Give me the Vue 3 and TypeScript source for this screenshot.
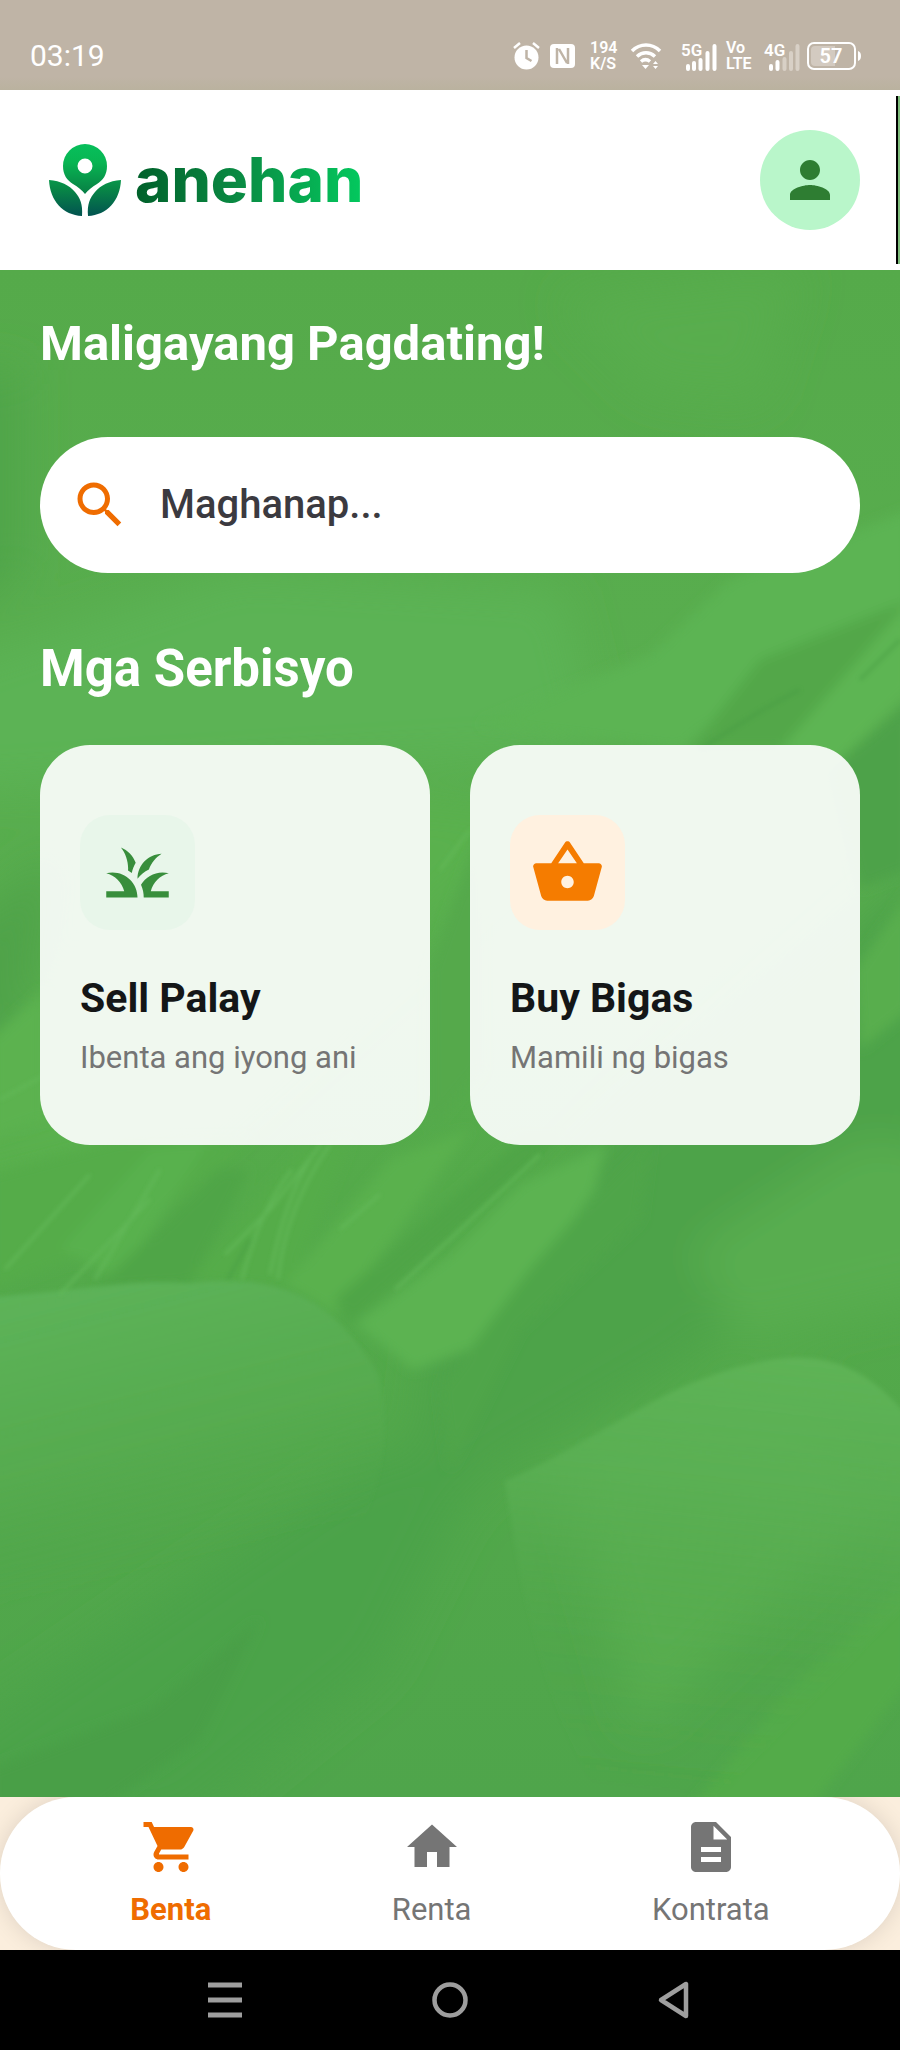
<script setup lang="ts">
import { ref } from 'vue'

interface Service {
  title: string
  note: string
  tone: string
  icon: string
}

interface Tab {
  label: string
  icon: string
}

const services: Service[] = [
  {
    title: 'Sell Palay',
    note: 'Ibenta ang iyong ani',
    tone: 'leaf',
    icon: 'M12 20H2v-2h5.75C7.02 15.19 4.81 12.99 2 12.26C2.64 12.1 3.31 12 4 12C8.42 12 12 15.58 12 20zM22 12.26C21.36 12.1 20.69 12 20 12c-2.93 0-5.48 1.58-6.88 3.93c.29.66.53 1.35.67 2.07c.13.65.2 1.32.2 2H22v-2h-5.75C16.98 15.19 19.19 12.99 22 12.26zM15.64 11.02c.78-2.09 2.23-3.84 4.09-5C15.44 6.16 12 9.67 12 14c0 .01 0 .02 0 .02C12.95 12.75 14.2 11.72 15.64 11.02zM11.42 8.85C10.58 6.66 8.88 4.89 6.7 4C8.14 5.86 9 8.18 9 10.71c0 .21-.03.41-.04.61c.43.24.83.52 1.22.82C10.39 10.96 10.83 9.85 11.42 8.85z',
  },
  {
    title: 'Buy Bigas',
    note: 'Mamili ng bigas',
    tone: 'grain',
    icon: 'M17.21 9l-4.38-6.56c-.19-.28-.51-.42-.83-.42-.32 0-.64.14-.83.43L6.79 9H2c-.55 0-1 .45-1 1 0 .09.01.18.04.27l2.54 9.27c.23.84 1 1.46 1.92 1.46h13c.92 0 1.69-.62 1.93-1.46l2.54-9.27L23 10c0-.55-.45-1-1-1h-4.79zM9 9l3-4.4L15 9H9zm3 8c-1.100 0-2-.9-2-2s.9-2 2-2 2 .9 2 2-.9 2-2 2z',
  },
]

const tabs: Tab[] = [
  {
    label: 'Benta',
    icon: 'M7 18c-1.100 0-1.990.9-1.990 2S5.900 22 7 22s2-.9 2-2-.9-2-2-2zM1 2v2h2l3.600 7.590-1.350 2.450c-.16.28-.25.61-.25.960 0 1.100.9 2 2 2h12v-2H7.420c-.14 0-.25-.11-.25-.25l.03-.12.9-1.630h7.450c.75 0 1.410-.41 1.750-1.030l3.580-6.490c.08-.14.12-.31.12-.48 0-.55-.45-1-1-1H5.210l-.94-2H1zm16 16c-1.100 0-1.990.9-1.990 2s.89 2 1.990 2 2-.9 2-2-.9-2-2-2z',
  },
  { label: 'Renta', icon: 'M10 20v-6h4v6h5v-8h3L12 3 2 12h3v8z' },
  {
    label: 'Kontrata',
    icon: 'M14 2H6c-1.100 0-1.990.9-1.990 2L4 20c0 1.100.89 2 1.990 2H18c1.100 0 2-.9 2-2V8l-6-6zm2 16H8v-2h8v2zm0-4H8v-2h8v2zm-3-5V3.500L18.500 9H13z',
  },
]

const active = ref('Benta')
const query = ref('')
</script>

<template>
  <div class="phone">
    <div class="status">
      <span class="clock">03:19</span>
      <div class="indicators">
        <svg width="30" height="28" viewBox="0 0 30 28">
          <circle cx="13.500" cy="15.500" r="12" fill="#fff" />
          <path d="M1 6l6-5M26 6l-6-5" stroke="#fff" stroke-width="2.500" />
          <path d="M13.500 8v8l5 3" fill="none" stroke="#bfb4a6" stroke-width="2.500" />
        </svg>
        <svg class="nfc" width="25" height="24" viewBox="0 0 25 24">
          <rect width="25" height="24" rx="4" fill="#fff" />
          <path d="M7 4v16M9 5l8 14M18 4v16" fill="none" stroke="#bfb4a6" stroke-width="2.500" />
        </svg>
        <span class="stack wide">194<br />K/S</span>
        <svg class="wifi" width="30" height="27" viewBox="0 0 30 27">
          <path d="M1 8c8-8 20-8 28 0M6 13.500c5.500-5 12.500-5 18 0M10 18.500c3-2.500 6-2.500 9 0" fill="none" stroke="#fff" stroke-width="3.500" />
          <path d="M11 22h7l-3.500 4zM22 21l2.500-3 2.500 3zM22 23h5l-2.500 3z" fill="#fff" />
        </svg>
        <svg width="38" height="30" viewBox="0 0 38 30">
          <text x="0" y="15" class="net">5G</text>
          <path d="M7 28v-3M13 28v-6M19.500 28v-9M26.500 28V12M33.500 28V5" stroke="#fff" stroke-width="4" stroke-linecap="round" />
        </svg>
        <span class="stack">Vo<br />LTE</span>
        <svg width="36" height="30" viewBox="0 0 36 30">
          <text x="0" y="15" class="net">4G</text>
          <path d="M7 28v-3M13.500 28v-7" stroke="#fff" stroke-width="4" stroke-linecap="round" />
          <path d="M20.500 28V18M27 28V12M33.500 28V5" stroke="#d8d0c6" stroke-width="4" stroke-linecap="round" />
        </svg>
        <svg width="55" height="28" viewBox="0 0 55 28">
          <rect x="1" y="1" width="47" height="26" rx="6" fill="none" stroke="#fff" stroke-width="2" />
          <path d="M4 8a4 4 0 0 1 4-4h20v20H8a4 4 0 0 1-4-4z" fill="#d3cac0" />
          <path d="M51 9c4 1 4 9 0 10z" fill="#fff" />
          <text x="24" y="21" text-anchor="middle" class="charge">57</text>
        </svg>
      </div>
    </div>

    <header class="top">
      <a class="brand" href="#" aria-label="anehan">
        <svg width="72" height="72" viewBox="0 0 72 72">
          <defs>
            <linearGradient id="mark" x1="0" y1="0" x2="0" y2="72" gradientUnits="userSpaceOnUse">
              <stop offset="0" stop-color="#07bf5b" />
              <stop offset=".25" stop-color="#08b653" />
              <stop offset=".62" stop-color="#088746" />
              <stop offset="1" stop-color="#025350" />
            </linearGradient>
          </defs>
          <path
            fill="url(#mark)"
            fill-rule="evenodd"
            d="M36 0a22 22 0 0 1 22 22c0 9-4 14-10 18-5 3-9 6-12 10-3-4-7-7-12-10-6-4-10-9-10-18A22 22 0 0 1 36 0zm0 14.500a7.500 7.500 0 1 0 0 15 7.500 7.500 0 0 0 0-15z"
          />
          <path fill="url(#mark)" d="M0 36c12 1 20 5 26 12 5 6 8 12 7 24C14 71 1 57 0 36zM72 36c-12 1-20 5-26 12-5 6-8 12-7 24 19-1 32-15 33-36z" />
        </svg>
        <span class="wordmark">anehan</span>
      </a>
      <button class="avatar" type="button" aria-label="Profile">
        <svg width="60" height="60" viewBox="0 0 24 24" fill="#2e7d32">
          <path d="M12 12c2.210 0 4-1.790 4-4s-1.790-4-4-4-4 1.790-4 4 1.790 4 4 4zm0 2c-2.670 0-8 1.340-8 4v2h16v-2c0-2.660-5.330-4-8-4z" />
        </svg>
      </button>
    </header>

    <main class="content">
      <svg class="field" viewBox="0 0 900 1528" preserveAspectRatio="none" aria-hidden="true">
        <defs>
          <linearGradient id="base" x1="0" y1="0" x2="0" y2="1">
            <stop offset="0" stop-color="#55aa4a" />
            <stop offset=".3" stop-color="#59ae4f" />
            <stop offset=".6" stop-color="#54aa4a" />
            <stop offset="1" stop-color="#4fa54b" />
          </linearGradient>
          <linearGradient id="grainLeft" x1="0" y1="0" x2=".2" y2="1">
            <stop offset="0" stop-color="#5eb45a" />
            <stop offset=".4" stop-color="#57ac50" stop-opacity=".8" />
            <stop offset=".65" stop-color="#50a64b" stop-opacity="0" />
          </linearGradient>
          <linearGradient id="grainRight" x1=".6" y1="0" x2=".5" y2="1">
            <stop offset="0" stop-color="#5eb356" />
            <stop offset=".3" stop-color="#5bb054" stop-opacity=".8" />
            <stop offset=".65" stop-color="#54a94d" stop-opacity=".2" />
            <stop offset="1" stop-color="#50a54b" stop-opacity="0" />
          </linearGradient>
          <filter id="haze" x="-20%" y="-20%" width="140%" height="140%"><feGaussianBlur stdDeviation="22" /></filter>
          <filter id="soft" x="-20%" y="-20%" width="140%" height="140%"><feGaussianBlur stdDeviation="6" /></filter>
          <filter id="fine" x="-5%" y="-5%" width="110%" height="110%"><feGaussianBlur stdDeviation="2" /></filter>
        </defs>
        <rect width="900" height="1528" fill="url(#base)" />
        <g filter="url(#haze)">
          <path d="M-60 100H20V300L-60 360z" fill="#50a44a" />
          <path d="M560 30L800 0 760 130 650 120z" fill="#59ad4e" />
          <path d="M-60 400L120 340 240 300 560 320 600 480 -60 520z" fill="#5cb355" />
          <path d="M-60 800L340 520 560 540 200 860 -60 930z" fill="#5ab14e" />
          <path d="M-60 680L60 580 0 880z" fill="#4fa348" />
          <path d="M430 1060L620 860 960 560V850L690 1090 500 1200 400 1300z" fill="#4ea349" />
          <path d="M690 980L860 870 960 880V1020L740 1070z" fill="#58ad4f" />
          <path d="M560 1190L800 1100 860 1250 640 1460z" fill="#59ae50" />
          <path d="M380 1180L480 1200 380 1400 180 1560H-60V1480z" fill="#4ca348" />
        </g>
        <g filter="url(#soft)">
          <path d="M480 455L650 385 730 310 910 240V330L760 410 680 480z" fill="#5cb452" />
          <path d="M690 480L760 390 910 330V380L820 480z" fill="#52a748" />
          <path d="M780 480L910 330V420L830 500z" fill="#5db553" />
          <path d="M830 500L910 430V600L860 620z" fill="#4da248" />
          <path d="M855 700L910 620V740L860 780z" fill="#59ae4e" />
          <path d="M-10 770L45 720V850L-10 870z" fill="#5bb250" />
          <path d="M-10 905L120 870 250 870 130 970 -10 1020z" fill="#55ac49" />
          <path d="M60 980L150 880 210 870 120 1010z" fill="#59b14d" />
          <path d="M95 1020L220 900 250 900 190 1015z" fill="#4fa546" />
          <path d="M190 1010L300 880 350 870 290 1020z" fill="#55ac48" />
          <path d="M285 1015L390 890 470 860 400 960 335 1045z" fill="#5ab14d" />
          <path d="M335 1030L450 930 520 870 560 870 350 1055z" fill="#4fa546" />
          <path d="M430 700L480 560V800L430 860z" fill="#54a94b" />
          <path d="M356 1054L450 985 520 915 605 875 595 920 540 1000 470 1080 413 1101z" fill="#5bb351" />
          <path d="M440 1120L530 1000 600 920 650 870 640 950 520 1060 450 1200z" fill="#50a549" />
          <path d="M690 1540L790 1420 910 1310V1410L810 1540z" fill="#53ab48" />
          <path d="M-10 1540V1500L150 1440 260 1350 200 1470 100 1540z" fill="#489f47" />
        </g>
        <g filter="url(#fine)">
          <path d="M-10 1028C90 1020 130 1010 190 1014C300 1000 345 1050 378 1105C395 1180 370 1250 340 1300C260 1400 190 1470 -10 1500z" fill="url(#grainLeft)" />
          <path d="M505 1212C570 1185 640 1135 689 1115C790 1075 850 1075 910 1150V1330L720 1528H600C540 1430 520 1310 505 1212z" fill="url(#grainRight)" />
        </g>
        <g fill="none" stroke="#64ba5a" stroke-width="3" filter="url(#fine)" opacity=".8">
          <path d="M225 985L270 940 321 875M242 1010Q260 940 292 900M270 1005Q285 930 310 890M278 1010Q285 940 330 875" />
          <path d="M60 1025L150 930M5 1000L90 905M95 1010L160 900M0 830L110 770M395 1020L450 970 540 885M440 600L470 560M340 960L380 925" />
        </g>
        <path d="M228 1010L250 970M700 480Q760 440 800 420M860 410L900 370" fill="none" stroke="#459a43" stroke-width="4" filter="url(#fine)" opacity=".4" />
      </svg>

      <div class="body">
        <h1>Maligayang Pagdating!</h1>
        <label class="search">
          <svg width="60" height="60" viewBox="0 0 24 24" fill="#ef6c00">
            <path d="M15.500 14h-.79l-.28-.27C15.410 12.590 16 11.110 16 9.500 16 5.910 13.090 3 9.500 3S3 5.910 3 9.500 5.910 16 9.500 16c1.610 0 3.090-.59 4.230-1.570l.27.28v.79l5 4.990L20.490 19l-4.990-5zm-6 0C7.010 14 5 11.990 5 9.500S7.010 5 9.500 5 14 7.010 14 9.500 11.990 14 9.500 14z" />
          </svg>
          <input v-model="query" type="text" aria-label="Maghanap" placeholder="Maghanap..." />
        </label>
        <h2>Mga Serbisyo</h2>
        <div class="cards">
          <button v-for="s in services" :key="s.title" class="card" type="button">
            <span class="tile" :class="s.tone">
              <svg width="75" height="75" viewBox="0 0 24 24" fill="currentColor"><path :d="s.icon" /></svg>
            </span>
            <span class="name">{{ s.title }}</span>
            <span class="note">{{ s.note }}</span>
          </button>
        </div>
      </div>
    </main>

    <div class="dock">
      <nav class="tabs">
        <button
          v-for="t in tabs"
          :key="t.label"
          class="tab"
          :class="{ on: active === t.label }"
          type="button"
          @click="active = t.label"
        >
          <svg width="60" height="60" viewBox="0 0 24 24" fill="currentColor"><path :d="t.icon" /></svg>
          <span>{{ t.label }}</span>
        </button>
      </nav>
    </div>

    <div class="system">
      <button type="button" aria-label="Recent apps">
        <svg width="40" height="40" viewBox="0 0 40 40"><path d="M3 5h34M3 20h34M3 35h34" stroke="#9e9e9e" stroke-width="5" /></svg>
      </button>
      <button type="button" aria-label="Home">
        <svg width="40" height="40" viewBox="0 0 40 40"><circle cx="20" cy="20" r="15.500" fill="none" stroke="#9e9e9e" stroke-width="4.500" /></svg>
      </button>
      <button type="button" aria-label="Back">
        <svg width="40" height="40" viewBox="0 0 40 40"><path d="M31 4v32L6 20z" fill="none" stroke="#9e9e9e" stroke-width="4.500" stroke-linejoin="round" /></svg>
      </button>
    </div>
  </div>
</template>

<style>
body {
  margin: 0;
}
</style>

<style scoped>
.phone {
  display: flex;
  flex-direction: column;
  min-height: 100vh;
  font-family: Roboto, "Liberation Sans", sans-serif;
  background: #fff;
}
button {
  border: 0;
  padding: 0;
  font: inherit;
  cursor: pointer;
}
svg {
  display: block;
  flex: none;
}

.status {
  box-sizing: border-box;
  display: flex;
  justify-content: space-between;
  align-items: center;
  height: 90px;
  padding: 22px 38px 0 30px;
  background: linear-gradient(#bfb4a6 85%, #bab29f);
  color: #fff;
}
.clock {
  font-size: 30px;
  line-height: 36px;
}
.indicators {
  display: flex;
  align-items: center;
  gap: 7px;
}
.indicators svg {
  overflow: visible;
}
.stack {
  width: 31px;
  font-size: 16px;
  line-height: 16px;
  font-weight: 600;
}
.stack.wide {
  width: 34px;
}
.nfc {
  margin-right: 8px;
}
.wifi {
  margin-right: 13px;
}
.net {
  font-size: 17px;
  font-weight: 600;
  fill: #fff;
}
.charge {
  font-size: 20px;
  font-weight: 600;
  fill: #fff;
}

.top {
  position: relative;
  box-sizing: border-box;
  display: flex;
  justify-content: space-between;
  align-items: center;
  height: 180px;
  padding: 0 40px 0 49px;
  background: #fff;
}
.top::after {
  content: "";
  position: absolute;
  top: 6px;
  bottom: 6px;
  right: 0;
  width: 2px;
  border-left: 2px solid #000;
  background: #7fbd7c;
}
.brand {
  display: flex;
  align-items: center;
  gap: 14px;
  text-decoration: none;
}
.wordmark {
  font-family: Inter, "Open Sans", sans-serif;
  font-weight: 800;
  font-size: 62px;
  line-height: 72px;
  color: transparent;
  background: linear-gradient(90deg, #00602a, #0a8a43 45%, #03c95e);
  background-clip: text;
}
.avatar {
  display: flex;
  align-items: center;
  justify-content: center;
  width: 100px;
  height: 100px;
  border-radius: 50%;
  background: #b9f6ca;
}

.content {
  position: relative;
  flex: 1;
  background: #55aa4c;
}
.field {
  position: absolute;
  inset: 0;
  width: 100%;
  height: 100%;
}
.body {
  position: relative;
  padding: 46px 40px 40px;
}
h1,
h2 {
  margin: 0;
  font-size: 49px;
  line-height: 56px;
  font-weight: 700;
  color: #fff;
}
h2 {
  font-size: 51px;
}
.search {
  display: flex;
  align-items: center;
  gap: 30px;
  height: 136px;
  margin: 65px 0 68px;
  padding: 0 30px;
  border-radius: 68px;
  background: #fff;
}
.search input {
  flex: 1;
  min-width: 0;
  padding: 0;
  border: 0;
  outline: 0;
  background: none;
  font: 500 40px/48px Roboto, "Liberation Sans", sans-serif;
  color: #3b3a40;
}
.search input::placeholder {
  color: #3b3a40;
  opacity: 1;
}
.cards {
  display: grid;
  grid-template-columns: 1fr 1fr;
  gap: 40px;
  margin-top: 48px;
}
.card {
  display: flex;
  flex-direction: column;
  align-items: flex-start;
  justify-content: center;
  min-height: 400px;
  padding: 0 40px;
  border-radius: 50px;
  background: rgba(255, 255, 255, 0.91);
  text-align: left;
}
.tile {
  padding: 20px;
  border-radius: 30px;
}
.tile.leaf {
  background: #e8f6ea;
  color: #388e3c;
}
.tile.grain {
  background: #fff1e0;
  color: #f57c00;
}
.name {
  margin-top: 44px;
  font-size: 41px;
  line-height: 48px;
  font-weight: 700;
  color: #141617;
}
.note {
  margin-top: 18px;
  font-size: 31px;
  line-height: 36px;
  color: #757575;
}

.dock {
  background: #fbeedd;
  overflow: hidden;
}
.tabs {
  box-sizing: border-box;
  display: flex;
  justify-content: space-around;
  height: 153px;
  padding: 20px 40px 0;
  border-radius: 76px;
  background: #fff;
  box-shadow: 0 0 24px rgba(0, 0, 0, 0.12);
}
.tab {
  display: flex;
  flex-direction: column;
  align-items: center;
  gap: 15px;
  height: 120px;
  background: none;
  font-size: 31px;
  line-height: 36px;
  color: #757575;
}
.tab.on {
  color: #ef6c00;
  font-weight: 700;
}

.system {
  display: flex;
  justify-content: space-between;
  align-items: center;
  height: 100px;
  padding: 0 195px;
  background: #000;
}
.system button {
  padding: 10px;
  background: none;
}
</style>
